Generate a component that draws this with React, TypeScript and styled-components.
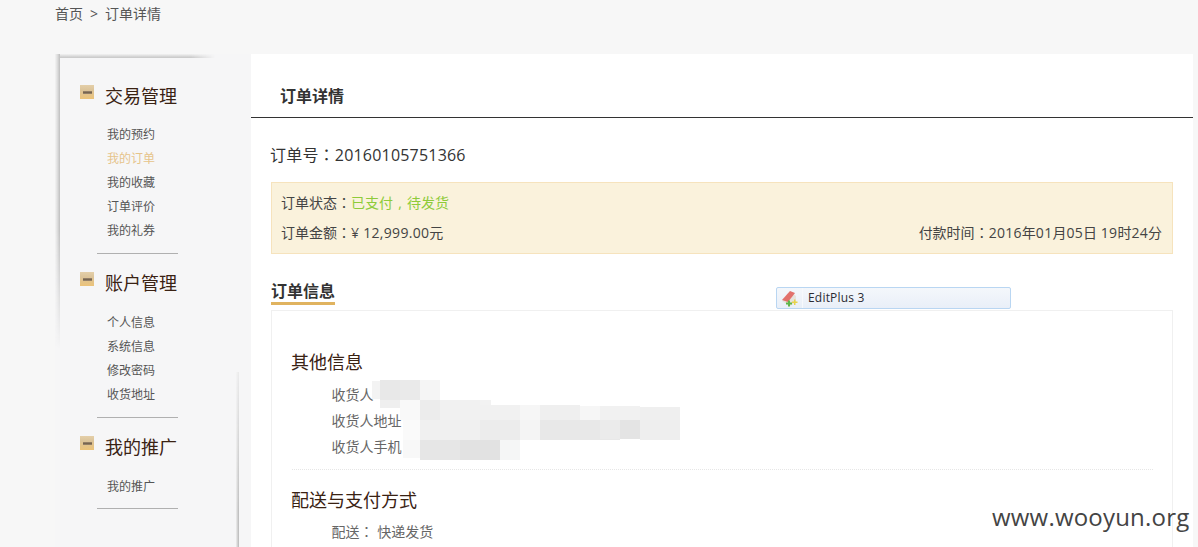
import React from "react";
import styled, { createGlobalStyle } from "styled-components";

const Global = createGlobalStyle`
  html, body { margin: 0; padding: 0; height: 547px; overflow: hidden; background: #f7f7f7; }
  body { font-family: "Open Sans", "Noto Sans CJK SC", sans-serif; color: #333; }
  * { box-sizing: border-box; }
`;

const Page = styled.div`
  position: relative;
  width: 1198px;
  height: 547px;
  overflow: hidden;
`;

const Breadcrumb = styled.div`
  height: 54px;
  padding: 5px 0 0 55px;
  display: flex;
  gap: 7px;
  font-size: 14px;
  line-height: 18px;
  color: #555;
`;

const Columns = styled.div`
  display: flex;
  align-items: flex-start;
  padding-left: 55px;
`;

const Sidebar = styled.aside`
  position: relative;
  width: 196px;
  height: 493px;
  background: #f6f6f7;
  padding: 30px 0 0 25px;
`;

const TopShadow = styled.div`
  position: absolute;
  left: 0;
  top: 0;
  width: 160px;
  height: 4px;
  background: linear-gradient(to bottom, #f2f2f2, #d2d2d2 70%, #c8c8c8);
  -webkit-mask-image: linear-gradient(to right, #000 85%, transparent);
  mask-image: linear-gradient(to right, #000 85%, transparent);
`;

const LeftShadow = styled.div`
  position: absolute;
  left: 0;
  top: 0;
  width: 5px;
  height: 295px;
  background: linear-gradient(to right, #f4f4f4, #dcdcdc 50%, #c4c4c4 90%, #f6f6f7);
  -webkit-mask-image: linear-gradient(to bottom, #000 60%, transparent);
  mask-image: linear-gradient(to bottom, #000 60%, transparent);
`;

const RightShadow = styled.div`
  position: absolute;
  left: 181px;
  top: 318px;
  width: 3px;
  bottom: 0;
  background: linear-gradient(to right, #eeeeee, #b8b8b8);
  -webkit-mask-image: linear-gradient(to bottom, rgba(0,0,0,.2), #000 80%);
  mask-image: linear-gradient(to bottom, rgba(0,0,0,.2), #000 80%);
`;

const Group = styled.section`
  margin-bottom: 17px;
`;

const GroupTitle = styled.h3`
  margin: 0;
  height: 24px;
  display: flex;
  align-items: center;
  gap: 11px;
  font-size: 18px;
  line-height: 24px;
  font-weight: 400;
  color: #3a2213;
`;

const Toggle = styled.span`
  position: relative;
  top: -4px;
  width: 14px;
  height: 14px;
  background: linear-gradient(to bottom, #e4cfa9 0%, #dcc49a 35%, #ecc379 100%);
  display: flex;
  align-items: center;
  justify-content: center;
  &::after {
    content: "";
    width: 9px;
    height: 3px;
    background: linear-gradient(to bottom, #a08b74, #77654f, #a08b74);
  }
`;

const SubList = styled.ul<{ $gap: number }>`
  list-style: none;
  margin: ${(p) => p.$gap}px 0 0 27px;
  padding: 0;
`;

const SubItem = styled.li<{ $active?: boolean }>`
  height: 24px;
  font-size: 12px;
  line-height: 24px;
  color: ${(p) => (p.$active ? "#e6c48b" : "#555")};
`;

const Rule = styled.hr<{ $gap?: number }>`
  margin: ${(p) => p.$gap ?? 10}px 0 0 17px;
  width: 81px;
  height: 1px;
  border: 0;
  background: #b0b0b0;
`;

const Main = styled.main`
  width: 942px;
  height: 493px;
  background: #fff;
`;

const MainTitleBar = styled.div`
  height: 64px;
  padding: 30px 0 0 29px;
  border-bottom: 1px solid #333;
  font-size: 16px;
  line-height: 24px;
  font-weight: 700;
  color: #333;
`;

const Content = styled.div`
  padding: 0 20px;
`;

const OrderNumber = styled.div`
  margin: 24px 0 0 -1px;
  font-size: 16px;
  line-height: 24px;
  letter-spacing: .2px;
  color: #333;
`;

const Punct = styled.span`
  font-family: "Noto Sans CJK TC", sans-serif;
`;

const Comma = styled.span`
  display: inline-block;
  width: 14px;
  text-align: center;
`;

const Num = styled.span`
  letter-spacing: .3px;
`;

const StatusBox = styled.div`
  margin-top: 15px;
  height: 72px;
  background: #faf2dc;
  border: 1px solid #f6e3bd;
  padding: 6px 10px 0 9px;
  font-size: 14px;
  color: #444;
`;

const StatusRow = styled.div`
  display: flex;
  justify-content: space-between;
  height: 30px;
  line-height: 26px;
`;

const Paid = styled.span`
  color: #8ecb3a;
`;

const SectionHead = styled.div`
  margin-top: 25px;
  display: flex;
`;

const SectionTitle = styled.span`
  height: 26px;
  border-bottom: 3px solid #e0b35f;
  font-size: 16px;
  line-height: 24px;
  font-weight: 700;
  color: #333;
`;

const Card = styled.div`
  margin-top: 5px;
  height: 300px;
  border: 1px solid #f0f0f0;
  padding: 38px 19px 0;
`;

const CardTitle = styled.h4`
  margin: 0;
  font-size: 18px;
  line-height: 26px;
  font-weight: 400;
  color: #3a2213;
`;

const InfoRows = styled.div<{ $gap: number }>`
  margin: ${(p) => p.$gap}px 0 0 40.5px;
`;

const InfoRow = styled.div`
  height: 26px;
  font-size: 14px;
  line-height: 26px;
  color: #666;
`;

const Dotted = styled.div`
  margin: 9px 0 17px 1px;
  border-top: 1px dotted #e6e6e6;
`;

const Mosaic = styled.svg`
  position: absolute;
  left: 0;
  top: 0;
`;

const Tip = styled.div`
  position: absolute;
  left: 776px;
  top: 287px;
  width: 235px;
  height: 22px;
  display: flex;
  align-items: center;
  background: linear-gradient(to bottom, #f4f7fb, #e9eff8);
  border: 1px solid #b9d6f2;
  border-radius: 2px;
  font-family: "Open Sans", sans-serif;
  font-size: 12px;
  letter-spacing: .2px;
  line-height: 18px;
  padding-bottom: 1px;
  color: #2b2b33;
`;

const TipIcon = styled.span`
  width: 26px;
  height: 20px;
  display: flex;
  align-items: center;
  justify-content: center;
  border-right: 1px solid #f7f9fc;
  margin-right: 5px;
`;

const Watermark = styled.div`
  position: absolute;
  left: 992px;
  top: 502px;
  font-family: "Open Sans", sans-serif;
  font-size: 24px;
  line-height: 30px;
  letter-spacing: .2px;
  color: #444;
`;

const rects: [number, number, number, number, string][] = [
  [372, 381, 8, 18, "#f3f3f3"], [380, 380, 20, 20, "#e8e8e8"], [400, 380, 20, 20, "#eaeaea"], [420, 380, 20, 20, "#f5f5f5"],
  [380, 400, 20, 8, "#efefef"], [400, 400, 20, 20, "#f9f9f9"], [420, 400, 20, 20, "#ececec"], [440, 400, 40, 20, "#f1f1f1"],
  [480, 400, 11, 5, "#f2f2f2"], [480, 405, 20, 15, "#f1f1f1"], [500, 405, 20, 15, "#f1f1f1"], [520, 405, 20, 15, "#f6f6f6"],
  [540, 405, 40, 15, "#efefef"], [580, 406, 20, 14, "#f6f6f6"], [600, 406, 40, 14, "#f1f1f1"], [640, 407, 40, 13, "#efefef"],
  [403, 420, 17, 20, "#fafafa"], [420, 420, 60, 20, "#f0f0f0"], [480, 420, 40, 20, "#ececec"], [520, 420, 20, 20, "#f4f4f4"],
  [540, 420, 80, 20, "#e8e8e8"], [600, 420, 20, 19, "#ebebeb"], [620, 420, 20, 19, "#e4e4e4"], [640, 420, 40, 20, "#eeeeee"],
  [403, 440, 17, 18, "#f8f8f8"], [420, 440, 40, 20, "#e6e6e6"], [460, 440, 40, 20, "#e2e2e2"], [500, 440, 20, 20, "#f5f6f6"],
];

export default function App() {
  return (
    <Page>
      <Global />
      <Breadcrumb>
        <span>首页</span>
        <span>&gt;</span>
        <span>订单详情</span>
      </Breadcrumb>
      <Columns>
        <Sidebar>
          <TopShadow />
          <LeftShadow />
          <RightShadow />
          <Group>
            <GroupTitle><Toggle />交易管理</GroupTitle>
            <SubList $gap={15}>
              <SubItem>我的预约</SubItem>
              <SubItem $active>我的订单</SubItem>
              <SubItem>我的收藏</SubItem>
              <SubItem>订单评价</SubItem>
              <SubItem>我的礼券</SubItem>
            </SubList>
            <Rule />
          </Group>
          <Group>
            <GroupTitle><Toggle />账户管理</GroupTitle>
            <SubList $gap={16}>
              <SubItem>个人信息</SubItem>
              <SubItem>系统信息</SubItem>
              <SubItem>修改密码</SubItem>
              <SubItem>收货地址</SubItem>
            </SubList>
            <Rule />
          </Group>
          <Group>
            <GroupTitle><Toggle />我的推广</GroupTitle>
            <SubList $gap={16}>
              <SubItem>我的推广</SubItem>
            </SubList>
            <Rule $gap={9} />
          </Group>
        </Sidebar>
        <Main>
          <MainTitleBar>订单详情</MainTitleBar>
          <Content>
            <OrderNumber>订单号<Punct>：</Punct>20160105751366</OrderNumber>
            <StatusBox>
              <StatusRow>
                <span>订单状态<Punct>：</Punct><Paid>已支付<Comma>,</Comma>待发货</Paid></span>
              </StatusRow>
              <StatusRow>
                <span>订单金额<Punct>：</Punct><Num>¥ 12,999.00</Num>元</span>
                <span>付款时间<Punct>：</Punct><Num>2016</Num>年<Num>01</Num>月<Num>05</Num>日 <Num>19</Num>时<Num>24</Num>分</span>
              </StatusRow>
            </StatusBox>
            <SectionHead>
              <SectionTitle>订单信息</SectionTitle>
            </SectionHead>
            <Card>
              <CardTitle>其他信息</CardTitle>
              <InfoRows $gap={7}>
                <InfoRow>收货人</InfoRow>
                <InfoRow>收货人地址</InfoRow>
                <InfoRow>收货人手机</InfoRow>
              </InfoRows>
              <Dotted />
              <CardTitle>配送与支付方式</CardTitle>
              <InfoRows $gap={5}>
                <InfoRow>配送<Punct>：</Punct> 快递发货</InfoRow>
              </InfoRows>
            </Card>
          </Content>
        </Main>
      </Columns>
      <Mosaic width="1198" height="547" viewBox="0 0 1198 547" aria-hidden="true">
        {rects.map(([x, y, w, h, c], i) => (
          <rect key={i} x={x} y={y} width={w} height={h} fill={c} />
        ))}
      </Mosaic>
      <Tip>
        <TipIcon>
          <svg width="18" height="18" viewBox="0 0 18 18" aria-hidden="true">
            <path d="M1 12 10 3l5 4v6l-6 4z" fill="#e6e2dc" />
            <path d="M1 11 9 2l5 2-7 9z" fill="#e2716c" />
            <path d="M5 13.500h2v-2h2v2h2v2H9v2H7v-2H5z" fill="#5fb548" />
            <path d="M11 12.500h2v-2h1.500v2H16.500V14h-2v2H13v-2h-2z" fill="#e8d44c" />
          </svg>
        </TipIcon>
        EditPlus 3
      </Tip>
      <Watermark>www.wooyun.org</Watermark>
    </Page>
  );
}
